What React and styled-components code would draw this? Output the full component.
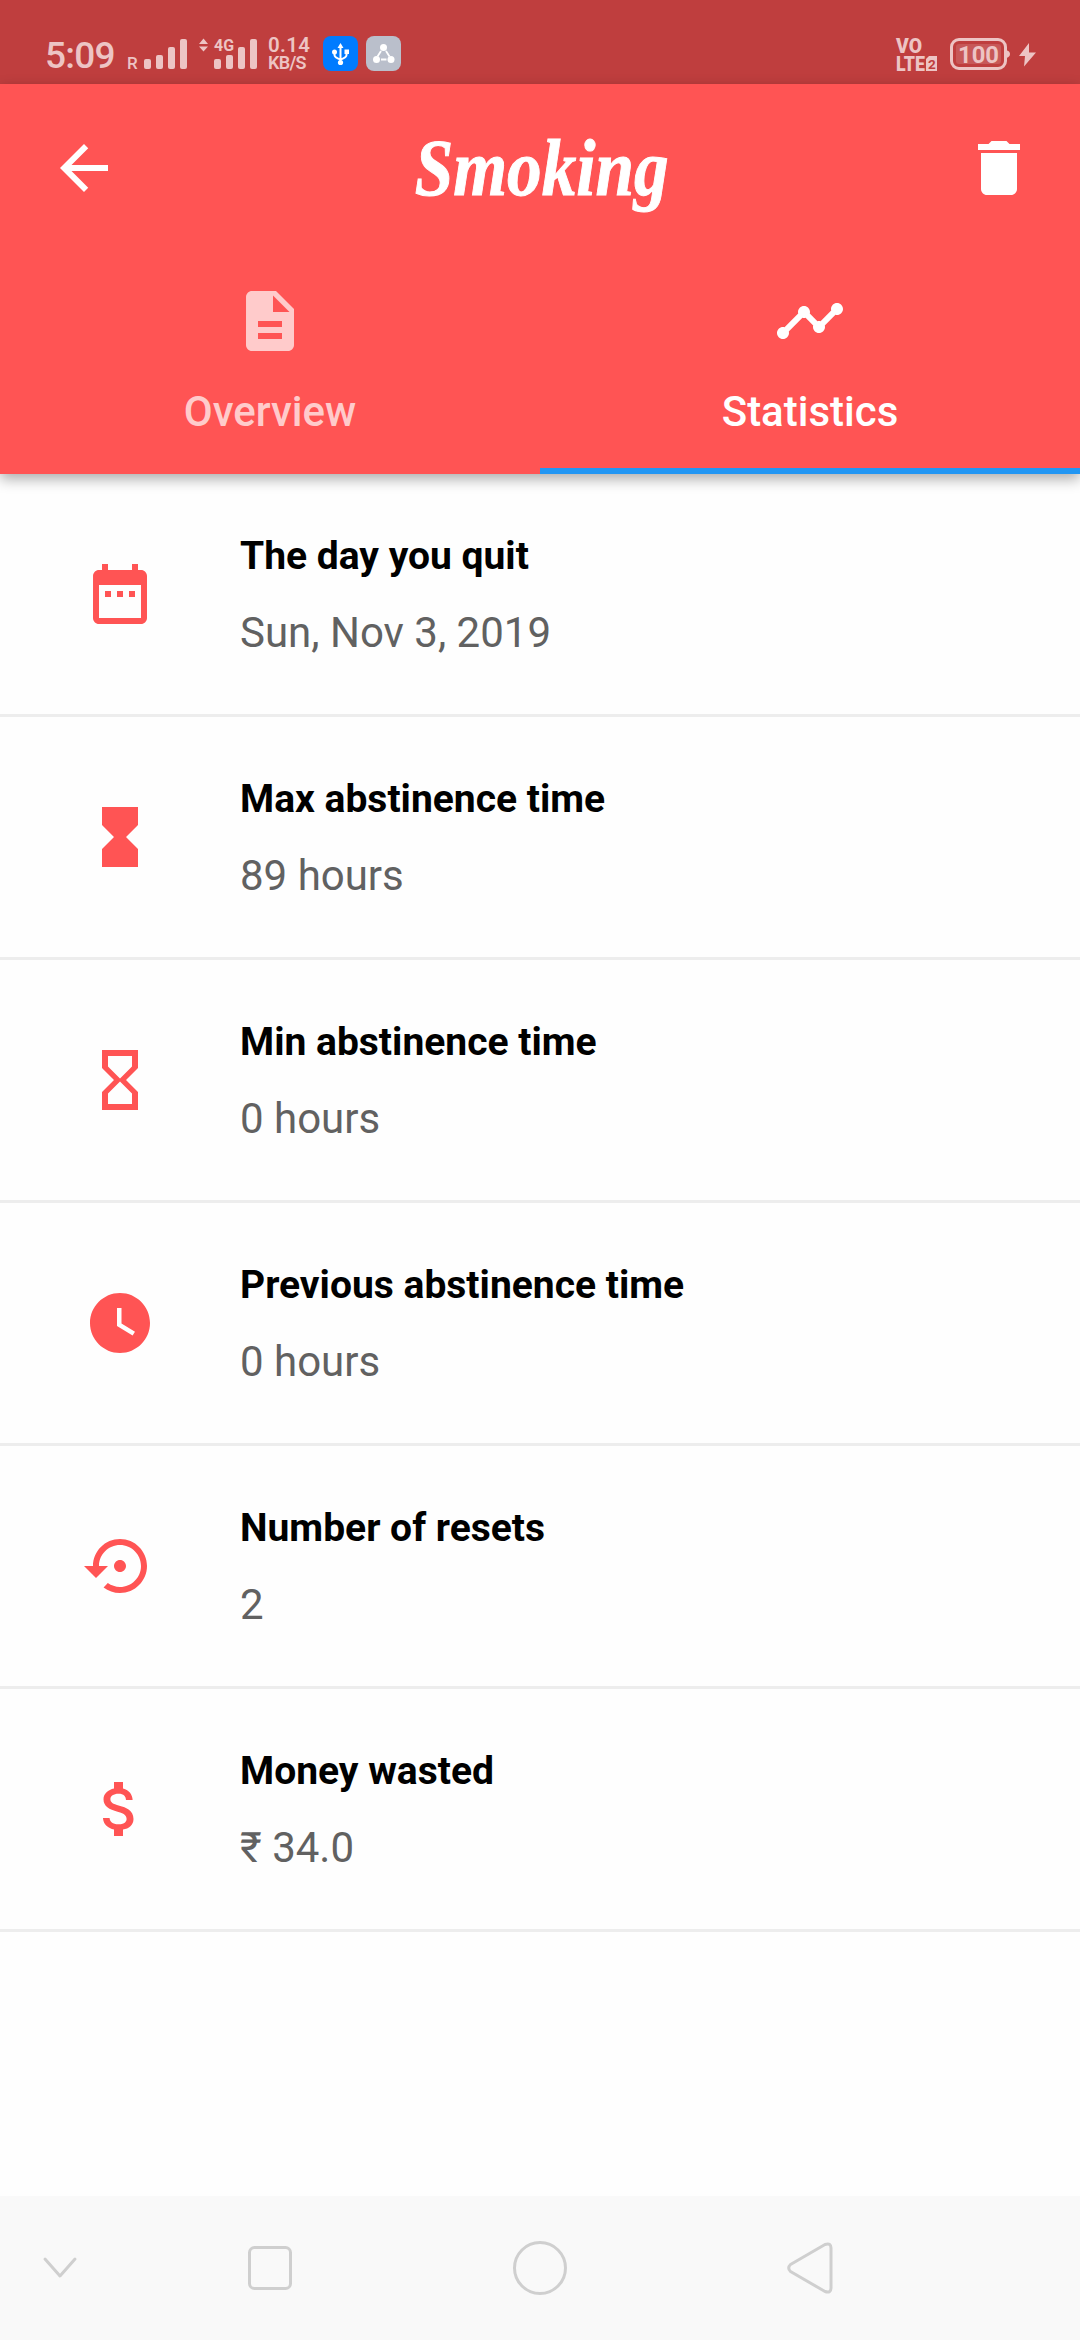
import React from 'react';
import styled, { createGlobalStyle } from 'styled-components';

const GlobalStyle = createGlobalStyle`
  *, *::before, *::after { box-sizing: border-box; }
  body { margin: 0; background: #fefefe; font-family: Roboto, "Noto Sans", sans-serif; }
`;

const Screen = styled.div`
  width: 1080px;
  height: 2340px;
  display: flex;
  flex-direction: column;
  background: #fefefe;
  overflow: hidden;
`;

const StatusBar = styled.div`
  height: 84px;
  flex: none;
  display: flex;
  align-items: flex-start;
  padding: 35px 44px 0 45px;
  background: #bf3e3e;
  color: #edc4c4;
`;

const Time = styled.span`
  width: 82px;
  margin-top: 1px;
  font-size: 37px;
  line-height: 40px;
  letter-spacing: -0.8px;
  font-weight: 500;
`;

const Glyph = styled.svg`
  display: block;
  flex: none;
  overflow: visible;
  width: ${(p) => p.$w}px;
  height: ${(p) => p.$h}px;
  margin-left: ${(p) => p.$left || 0}px;
  margin-top: ${(p) => p.$top || 0}px;
  fill: currentColor;
`;

const SpeedMeter = styled.div`
  width: 44px;
  margin: 2px 0 0 11px;
  display: flex;
  flex-direction: column;
  font-weight: 600;
`;

const SpeedValue = styled.span`
  font-size: 20.5px;
  line-height: 17px;
  letter-spacing: 0.3px;
`;

const SpeedUnit = styled.span`
  font-size: 18px;
  line-height: 17px;
  letter-spacing: -0.7px;
`;

const Badge = styled.span`
  width: 35px;
  height: 35px;
  margin: 1px 0 0 ${(p) => p.$left}px;
  border-radius: 8px;
  display: flex;
  align-items: center;
  justify-content: center;
  color: #fff;
  background: ${(p) => p.$color};
`;

const StatusSpacer = styled.div`
  flex: 1;
`;

const Header = styled.header`
  position: relative;
  z-index: 1;
  height: 390px;
  flex: none;
  display: flex;
  flex-direction: column;
  background: #ff5454;
  color: #fff;
  box-shadow: 0 5px 13px rgba(0, 0, 0, 0.33);
`;

const Toolbar = styled.div`
  height: 168px;
  display: flex;
  align-items: center;
  justify-content: space-between;
  padding: 0 45px 0 48px;
`;

const IconButton = styled.button`
  width: 72px;
  height: 72px;
  padding: 0;
  border: 0;
  background: none;
  color: inherit;
`;

const Title = styled.h1`
  margin: 0;
  font-family: "Liberation Serif", serif;
  font-style: italic;
  font-weight: 700;
  font-size: 80px;
  line-height: 90px;
  -webkit-text-stroke: 1px currentColor;
  transform: scaleX(0.865);
`;

const Tabs = styled.nav`
  height: 222px;
  display: grid;
  grid-template-columns: 1fr 1fr;
`;

const Tab = styled.a`
  display: flex;
  flex-direction: column;
  align-items: center;
  padding-top: 33px;
  gap: 31px;
  font-size: 42px;
  line-height: 48px;
  font-weight: 500;
  color: ${(p) => (p.$active ? '#fff' : '#ffcbcb')};
  border-bottom: 6px solid ${(p) => (p.$active ? '#2196f3' : 'transparent')};
`;

const List = styled.main`
  flex: 1;
  display: flex;
  flex-direction: column;
`;

const Row = styled.section`
  height: 243px;
  flex: none;
  display: flex;
  align-items: center;
  padding-left: 84px;
  border-bottom: 3px solid #ededed;
`;

const RowIcon = styled.div`
  width: 156px;
  color: #ff5454;
`;

const RowText = styled.div`
  display: flex;
  flex-direction: column;
  gap: 30px;
  padding-top: 2px;
`;

const Label = styled.span`
  font-size: 39px;
  line-height: 46px;
  font-weight: 700;
  color: #000;
`;

const Value = styled.span`
  font-size: 42px;
  line-height: 48px;
  color: #616161;
`;

const NavBar = styled.footer`
  height: 144px;
  flex: none;
  display: flex;
  align-items: center;
  background: #f9f9f9;
  color: #cfcfcf;
`;

const MaterialIcon = ({ d, size = 72 }) => (
  <Glyph $w={size} $h={size} viewBox="0 0 24 24">
    <path d={d} fillRule="evenodd" />
  </Glyph>
);

const icons = {
  back: 'M20 11H7.83l5.59-5.59L12 4l-8 8 8 8 1.41-1.41L7.83 13H20v-2z',
  trash: 'M6 19c0 1.1.9 2 2 2h8c1.1 0 2-.9 2-2V7H6v12zM19 4h-3.5l-1-1h-5l-1 1H5v2h14V4z',
  document: 'M14 2H6c-1.1 0-1.99.9-1.99 2L4 20c0 1.1.89 2 1.99 2H18c1.1 0 2-.9 2-2V8l-6-6zm2 16H8v-2h8v2zm0-4H8v-2h8v2zm-3-5V3.5L18.5 9H13z',
  timeline: 'M23 8c0 1.1-.9 2-2 2-.18 0-.35-.02-.51-.07l-3.56 3.55c.05.16.07.34.07.52 0 1.1-.9 2-2 2s-2-.9-2-2c0-.18.02-.36.07-.52l-2.55-2.55c-.16.05-.34.07-.52.07s-.36-.02-.52-.07l-4.55 4.56c.05.16.07.33.07.51 0 1.1-.9 2-2 2s-2-.9-2-2 .9-2 2-2c.18 0 .35.02.51.07l4.56-4.55C8.02 9.36 8 9.18 8 9c0-1.1.9-2 2-2s2 .9 2 2c0 .18-.02.36-.07.52l2.55 2.55c.16-.05.34-.07.52-.07s.36.02.52.07l3.55-3.56C19.02 8.35 19 8.18 19 8c0-1.1.9-2 2-2s2 .9 2 2z',
  calendar: 'M9 11H7v2h2v-2zm4 0h-2v2h2v-2zm4 0h-2v2h2v-2zm2-7h-1V2h-2v2H8V2H6v2H5c-1.11 0-1.99.9-1.99 2L3 20c0 1.1.89 2 2 2h14c1.1 0 2-.9 2-2V6c0-1.1-.9-2-2-2zm0 16H5V9h14v11z',
  hourglassFull: 'M6 2v6h.01L6 8.01 10 12l-4 4 .01.01H6V22h12v-5.99h-.01L18 16l-4-4 4-3.99-.01-.01H18V2H6z',
  hourglassEmpty: 'M6 2v6h.01L6 8.01 10 12l-4 4 .01.01H6V22h12v-5.99h-.01L18 16l-4-4 4-3.99-.01-.01H18V2H6zm10 14.5V20H8v-3.5l4-4 4 4zm-4-5l-4-4V4h8v3.5l-4 4z',
  clock: 'M12 2C6.5 2 2 6.5 2 12s4.5 10 10 10 10-4.5 10-10S17.5 2 12 2zm4.2 14.2L11 13V7h1.5v5.2l4.5 2.7-.8 1.3z',
  restore: 'M14 12c0-1.1-.9-2-2-2s-2 .9-2 2 .9 2 2 2 2-.9 2-2zm-2-9c-4.97 0-9 4.03-9 9H0l4 4 4-4H5c0-3.87 3.13-7 7-7s7 3.13 7 7-3.13 7-7 7c-1.51 0-2.91-.49-4.06-1.3l-1.42 1.44C8.04 20.3 9.94 21 12 21c4.97 0 9-4.03 9-9s-4.03-9-9-9z',
  money: 'M11.8 10.9c-2.27-.59-3-1.2-3-2.15 0-1.09 1.01-1.85 2.7-1.85 1.78 0 2.44.85 2.5 2.1h2.21c-.07-1.72-1.12-3.3-3.21-3.81V3h-3v2.16c-1.94.42-3.5 1.68-3.5 3.61 0 2.31 1.91 3.46 4.7 4.13 2.5.6 3 1.48 3 2.41 0 .69-.49 1.79-2.7 1.79-2.06 0-2.87-.92-2.98-2.1h-2.2c.12 2.19 1.76 3.42 3.68 3.83V21h3v-2.15c1.95-.37 3.5-1.5 3.5-3.55 0-2.84-2.43-3.81-4.7-4.4z',
};

const stats = [
  { icon: icons.calendar, label: 'The day you quit', value: 'Sun, Nov 3, 2019' },
  { icon: icons.hourglassFull, label: 'Max abstinence time', value: '89 hours' },
  { icon: icons.hourglassEmpty, label: 'Min abstinence time', value: '0 hours' },
  { icon: icons.clock, label: 'Previous abstinence time', value: '0 hours' },
  { icon: icons.restore, label: 'Number of resets', value: '2' },
  { icon: icons.money, label: 'Money wasted', value: '₹ 34.0' },
];

const SmallText = ({ size, weight = 500, ...rest }) => (
  <text fontFamily="Roboto, sans-serif" fontSize={size} fontWeight={weight} {...rest} />
);

const SignalBars = () => (
  <>
    <rect x="0" y="20" width="7" height="10" rx="2" />
    <rect x="12" y="16" width="7" height="14" rx="2" />
    <rect x="24" y="8" width="7" height="22" rx="2" />
    <rect x="36" y="0" width="7" height="30" rx="2" />
  </>
);

const RoamingSignal = () => (
  <Glyph $w={60} $h={36} $top={2} viewBox="0 0 60 36">
    <SmallText size="17" x="0" y="31.500">R</SmallText>
    <g transform="translate(17 2)"><SignalBars /></g>
  </Glyph>
);

const DataSignal = () => (
  <Glyph $w={59} $h={36} $left={11} $top={2} viewBox="0 0 59 36">
    <path d="M1 7 5.500 1.500 10 7zM1 9.500h9L5.500 14.500z" />
    <SmallText size="17" weight="700" x="16" y="14" textLength="20" lengthAdjust="spacingAndGlyphs">4G</SmallText>
    <g transform="translate(16 2)"><SignalBars /></g>
  </Glyph>
);

const UsbIcon = () => (
  <Glyph $w={35} $h={35} viewBox="0 0 35 35">
    <path d="M17.500 10v17M11.500 17v2q0 2.500 6 4.500M23.500 17v2q0 2.500-6 4.500" fill="none" stroke="currentColor" strokeWidth="2" />
    <path d="M17.500 7l3 5h-6zM21.500 13.500h4.500v4.500h-4.500z" />
    <circle cx="11.500" cy="16" r="2.500" />
    <circle cx="17.500" cy="26.500" r="2.600" />
  </Glyph>
);

const ShareIcon = () => (
  <Glyph $w={35} $h={35} viewBox="0 0 35 35">
    <path d="M15 15l-3.500 5.500M20 15l3.500 5.500M15 23.500h5.500" fill="none" stroke="currentColor" strokeWidth="1.800" />
    <circle cx="17.500" cy="11.500" r="3.500" />
    <circle cx="10.500" cy="23.500" r="3.500" />
    <circle cx="25" cy="23.500" r="3.500" />
  </Glyph>
);

const VolteIcon = () => (
  <Glyph $w={42} $h={36} $top={2} viewBox="0 0 42 36">
    <SmallText size="20" weight="900" x="0" y="16" textLength="26" lengthAdjust="spacingAndGlyphs">VO</SmallText>
    <SmallText size="21" weight="900" x="0" y="34" textLength="29" lengthAdjust="spacingAndGlyphs">LTE</SmallText>
    <path d="M33 19h8v15H30V22z" />
    <SmallText size="13.500" weight="700" x="32" y="31.500" fill="#bf3e3e">2</SmallText>
  </Glyph>
);

const BatteryIcon = () => (
  <Glyph $w={60} $h={32} $left={12} $top={3} viewBox="0 0 60 32">
    <rect x="1.500" y="1.500" width="54" height="29" rx="7.500" fill="none" stroke="currentColor" strokeWidth="3" />
    <path d="M56 12q4 1 4 4t-4 4z" />
    <rect x="6" y="6" width="45" height="20" rx="3" opacity=".2" />
    <SmallText size="23" weight="700" x="8" y="24.500" textLength="41" lengthAdjust="spacingAndGlyphs">100</SmallText>
  </Glyph>
);

const BoltIcon = () => (
  <Glyph $w={17} $h={24} $left={9} $top={8} viewBox="0 0 17 24">
    <path d="M10 0 0 13h6L5 23.500 17 9.500h-7z" />
  </Glyph>
);

const navStroke = { fill: 'none', stroke: 'currentColor', strokeWidth: 3, strokeLinejoin: 'round', strokeLinecap: 'round' };

export default function App() {
  return (
    <Screen>
      <GlobalStyle />
      <StatusBar>
        <Time>5:09</Time>
        <RoamingSignal />
        <DataSignal />
        <SpeedMeter>
          <SpeedValue>0.14</SpeedValue>
          <SpeedUnit>KB/S</SpeedUnit>
        </SpeedMeter>
        <Badge $left={11} $color="#007bff"><UsbIcon /></Badge>
        <Badge $left={8} $color="#babfcb"><ShareIcon /></Badge>
        <StatusSpacer />
        <VolteIcon />
        <BatteryIcon />
        <BoltIcon />
      </StatusBar>
      <Header>
        <Toolbar>
          <IconButton aria-label="Back"><MaterialIcon d={icons.back} /></IconButton>
          <Title>Smoking</Title>
          <IconButton aria-label="Delete"><MaterialIcon d={icons.trash} /></IconButton>
        </Toolbar>
        <Tabs>
          <Tab><MaterialIcon d={icons.document} />Overview</Tab>
          <Tab $active><MaterialIcon d={icons.timeline} />Statistics</Tab>
        </Tabs>
      </Header>
      <List>
        {stats.map((s) => (
          <Row key={s.label}>
            <RowIcon><MaterialIcon d={s.icon} /></RowIcon>
            <RowText>
              <Label>{s.label}</Label>
              <Value>{s.value}</Value>
            </RowText>
          </Row>
        ))}
      </List>
      <NavBar>
        <Glyph $w={34} $h={22} $left={43} viewBox="0 0 34 22">
          <path d="M2 2l15 17L32 2" {...navStroke} />
        </Glyph>
        <Glyph $w={44} $h={44} $left={171} viewBox="0 0 44 44">
          <rect x="1.500" y="1.500" width="41" height="41" rx="5" {...navStroke} />
        </Glyph>
        <Glyph $w={54} $h={54} $left={221} viewBox="0 0 54 54">
          <circle cx="27" cy="27" r="25.500" {...navStroke} />
        </Glyph>
        <Glyph $w={46} $h={52} $left={220} viewBox="0 0 46 52">
          <path d="M38 2.500 3.500 22.500Q0 26 3.500 29.500L38 49.500Q44 51.500 44 46V6Q44 .5 38 2.500Z" {...navStroke} />
        </Glyph>
      </NavBar>
    </Screen>
  );
}
